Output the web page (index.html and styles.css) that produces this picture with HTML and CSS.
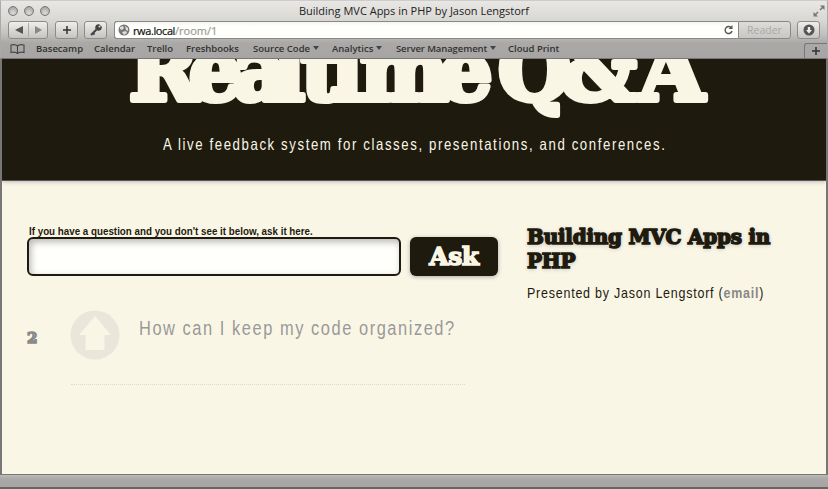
FILE: index.html
```html
<!DOCTYPE html>
<html lang="en">
<head>
<meta charset="utf-8">
<title>Building MVC Apps in PHP by Jason Lengstorf</title>
<link rel="stylesheet" href="styles.css">
</head>
<body>
<div class="window">
  <div class="chrome">
    <div class="titlebar">
      <div class="lights"><i></i><i></i><i></i></div>
      <div class="title">Building MVC Apps in PHP by Jason Lengstorf</div>
      <svg class="expand" width="12" height="12" viewBox="0 0 12 12"><path d="M7 .5h4.500V5zM.5 7v4.500H5z" fill="#777"/><path d="M10 2L7 5M2 10l3-3" stroke="#777" stroke-width="1.500"/></svg>
    </div>
    <div class="toolbar">
      <div class="btn nav">
        <svg width="39" height="16" viewBox="0 0 39 16"><path d="M6 8l8-4v8z" fill="#555"/><path d="M19.500 1v14" stroke="#aaa"/><path d="M33 8l-7-4v8z" fill="#888"/></svg>
      </div>
      <div class="btn plus"><svg width="20" height="16" viewBox="0 0 20 16"><path d="M10 4v8M6 8h8" stroke="#333" stroke-width="1.500"/></svg></div>
      <div class="btn key"><svg width="20" height="16" viewBox="0 0 20 16"><path d="M11 7l-6 6M7 11l1.500 1.500" stroke="#444" stroke-width="2"/><path d="M10 3l3-1 3 3-1 3-3 1-3-3z" fill="#444"/><circle cx="13.500" cy="4.500" r="1" fill="#ddd"/></svg></div>
      <div class="address">
        <svg class="globe" width="12" height="12" viewBox="0 0 12 12"><circle cx="6" cy="6" r="5.500" fill="#777"/><path d="M2 3l3-1 1 2-2 2-2-1zM7 2l3 2v3L8 6zM4 8l4-1 1 2-3 2z" fill="#ddd"/></svg>
        <span class="url">rwa.local<em>/room/1</em></span>
        <svg class="reload" width="11" height="12" viewBox="0 0 11 12"><path d="M8.500 4A3.500 3.500 0 1 0 9 7" fill="none" stroke="#555" stroke-width="1.400"/><path d="M9.500 1v4H5.500z" fill="#555"/></svg>
      </div>
      <div class="reader">Reader</div>
      <div class="btn download"><svg width="20" height="16" viewBox="0 0 20 16"><circle cx="10" cy="8" r="5.500" fill="#555"/><path d="M8.800 5h2.400v3H13l-3 3.500L7 8h1.800z" fill="#eee"/></svg></div>
    </div>
    <div class="bookmarks">
      <svg class="book" width="15" height="10" viewBox="0 0 15 10"><path d="M7.500 2C6 .5 3 .5 1 1v7.500c2-.5 5-.5 6.500 1 1.500-1.500 4.500-1.500 6.500-1V1c-2-.5-5-.5-6.500 1zv7.500" fill="none" stroke="#444" stroke-width="1.100"/></svg>
      <span class="bm1">Basecamp</span><span class="bm2">Calendar</span><span class="bm3">Trello</span><span class="bm4">Freshbooks</span><span class="bm5 menu">Source Code</span><span class="bm6 menu">Analytics</span><span class="bm7 menu">Server Management</span><span class="bm8">Cloud Print</span>
      <div class="newtab"><svg width="22" height="15" viewBox="0 0 22 15"><path d="M11 3v8M7 7h8" stroke="#333" stroke-width="1.500"/></svg></div>
    </div>
  </div>
  <div class="page">
    <header class="banner">
      <h1>
        <svg width="824" height="69" viewBox="2 59 824 69">
          <text x="129 189 233 273 301 331 360 439" y="100">Realtime</text>
          <text x="498 561 639" y="100">Q&amp;A</text>
        </svg>
      </h1>
      <p class="tagline">A live feedback system for classes, presentations, and conferences.</p>
    </header>
    <main class="content">
      <section class="questions">
        <form class="ask">
          <div class="field">
            <label for="q">If you have a question and you don't see it below, ask it here.</label>
            <input id="q" type="text">
          </div>
          <button type="button"><span>Ask</span></button>
        </form>
        <div class="question">
          <span class="votes">2</span>
          <svg class="vote" width="50" height="50" viewBox="0 0 50 50"><circle cx="25" cy="25" r="24.500" fill="#e9e6dc"/><path d="M25 6l16 19h-6.500v15h-19V25H9z" fill="#faf6e6"/></svg>
          <p>How can I keep my code organized?</p>
        </div>
      </section>
      <aside>
        <h2>Building MVC Apps in<br>PHP</h2>
        <p>Presented by Jason Lengstorf (<a>email</a>)</p>
      </aside>
    </main>
  </div>
  <div class="statusbar"></div>
</div>
</body>
</html>
```
FILE: styles.css
```css
* { box-sizing: border-box; }
body { margin: 0; background: #777; }
h1, h2, p { margin: 0; font-weight: normal; }
svg { display: block; flex: none; }
.window { width: 828px; height: 489px; display: flex; flex-direction: column; font-family: "Open Sans", sans-serif; overflow: hidden; }
.chrome { height: 59px; flex: none; background: linear-gradient(#e8e7e4, #d8d7d4 20px, #c0bfbc 34px, #aaa9a7 42px, #a6a5a3); border: 1px solid #aaa; border-bottom-color: #777; border-top-color: #ccc; }
.titlebar { height: 20px; display: flex; align-items: center; padding: 0 2px 0 7px; }
.lights { display: flex; gap: 6px; width: 60px; }
.lights i { width: 10px; height: 10px; border-radius: 50%; border: 1px solid #777; background: radial-gradient(circle at 50% 75%, #ddd, #999); }
.title { flex: 1; text-align: center; font-size: 11px; line-height: 20px; color: #222; padding-right: 15px; }
.expand { margin-left: 38px; }
.toolbar { height: 18px; display: flex; padding: 0 7px; }
.btn { height: 18px; border: 1px solid #8c8c8a; border-radius: 3px; background: linear-gradient(#efeeeb, #c5c4c1); display: flex; justify-content: center; overflow: hidden; }
.nav { width: 40px; margin-right: 7px; }
.plus { width: 23px; margin-right: 6px; }
.key { width: 23px; margin-right: 7px; }
.address { flex: 1; height: 18px; background: linear-gradient(#f4f4f0, #fffffc 4px); border: 1px solid #888; border-right: 0; border-radius: 3px 0 0 3px; display: flex; align-items: center; padding: 0 4px 0 3px; }
.url { flex: 1; font-size: 11px; line-height: 15px; color: #111; padding-left: 3px; letter-spacing: -.4px; -webkit-text-stroke: .2px; }
.url em { font-style: normal; color: #999; letter-spacing: 0; }
.reader { width: 53px; height: 18px; border: 1px solid #888; border-radius: 0 3px 3px 0; background: linear-gradient(#dddcd9, #c8c7c4); color: #aaa9a7; font-size: 10.500px; line-height: 16px; text-align: center; margin-right: 6px; }
.download { width: 23px; }
.bookmarks { height: 19px; display: flex; align-items: center; padding-left: 9px; font-size: 9.500px; font-weight: 600; color: #333230; white-space: nowrap; }
.bookmarks span { flex: none; line-height: 13px; }
.book { margin-right: 11px; }
.bm1 { width: 58px; } .bm2 { width: 53px; } .bm3 { width: 39px; } .bm4 { width: 67px; }
.bm5 { width: 79px; } .bm6 { width: 64px; } .bm7 { width: 112px; } .bm8 { width: 60px; }
.bm7 { letter-spacing: -.1px; }
.menu::after { content: ""; display: inline-block; border: 3px solid transparent; border-top: 4px solid #444; border-bottom: 0; margin-left: 3px; vertical-align: 2px; }
.newtab { margin-left: auto; width: 23px; height: 15px; align-self: flex-end; border: 1px solid #777; border-right: 0; border-bottom: 0; border-radius: 3px 0 0 0; }
.page { flex: 1; margin: 0 2px; background: #faf6e6; overflow: hidden; }
.banner { height: 122px; background: #1e1a0e; color: #faf6e6; border-bottom: 1px solid #555; box-shadow: 0 1px 4px #bbb; }
h1 { height: 69px; font: bold 84px "DejaVu Serif", serif; }
h1 text { fill: #faf6e6; stroke: #faf6e6; stroke-width: 6px; stroke-linejoin: round; }
.tagline { width: max-content; font: 16.500px/20px "Liberation Sans", sans-serif; letter-spacing: 2px; margin-left: 161px; padding-top: 6px; white-space: nowrap; transform: scaleX(.8); transform-origin: 0 0; }
.content { display: flex; padding: 44px 26px 0 25px; }
.questions { width: 500px; flex: none; }
.ask { display: flex; align-items: flex-end; gap: 9px; }
.field { width: 374px; display: flex; flex-direction: column; }
label { width: max-content; font: bold 11px/12px "Liberation Sans", sans-serif; color: #1e1a0e; margin-left: 2px; white-space: nowrap; transform: scaleX(.89); transform-origin: 0 0; }
input { width: 374px; height: 39px; border: 2px solid #1e1a0e; border-radius: 6px; background: #fffffc; box-shadow: inset 2px 3px 7px #bbb8b8; }
button { width: 88px; height: 39px; padding: 0; border: 0; border-radius: 6px; background: #1e1a0e; color: #faf6e6; font: bold 25px/38px "DejaVu Serif", serif; box-shadow: 0 1px 4px #aaa; letter-spacing: -.5px; -webkit-text-stroke: 1.500px #faf6e6; }
.question { margin-top: 34px; display: flex; height: 75px; position: relative; }
.question::after { content: ""; position: absolute; left: 44px; width: 394px; bottom: 0; border-bottom: 1px dotted #dedbd0; }
.votes { width: 43px; padding-top: 18px; font: bold 15px/20px "DejaVu Serif", serif; color: #999; -webkit-text-stroke: 1.500px #888; }
.question p { font: 20px/24px "Liberation Sans", sans-serif; letter-spacing: 1.900px; color: #999; margin-left: 19px; padding-top: 6px; white-space: nowrap; transform: scaleX(.82); transform-origin: 0 0; }
aside { flex: 1; color: #1e1a0e; white-space: nowrap; }
h2 { font: bold 20px/24px "DejaVu Serif", serif; letter-spacing: -.25px; -webkit-text-stroke: 1.500px #1e1a0e; text-shadow: 0 1px 4px #aaa; }
aside p { width: max-content; font: 14.500px/20px "Liberation Sans", sans-serif; letter-spacing: .9px; padding-top: 10px; transform: scaleX(.86); transform-origin: 0 0; }
aside a { color: #888; font-weight: bold; }
.statusbar { height: 15px; flex: none; background: linear-gradient(#bbb, #aaa9a7 4px, #a6a5a3); border-top: 1px solid #777; border-bottom: 2px solid #666; }
```
